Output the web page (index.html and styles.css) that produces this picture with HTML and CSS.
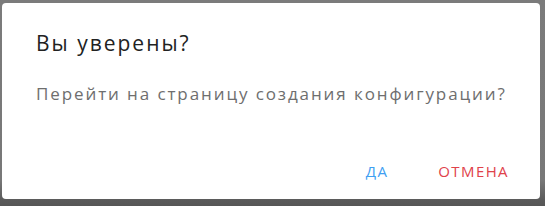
FILE: index.html
```html
<!DOCTYPE html>
<html lang="ru">
<head>
<meta charset="utf-8">
<link rel="stylesheet" href="styles.css">
</head>
<body>
<div class="backdrop">
  <div class="dialog">
    <h2 class="title">Вы уверены?</h2>
    <p class="content">Перейти на страницу создания конфигурации?</p>
    <div class="actions">
      <button class="btn btn-ok">ДА</button>
      <button class="btn btn-cancel">ОТМЕНА</button>
    </div>
  </div>
</div>
</body>
</html>
```
FILE: styles.css
```css
html, body {
  margin: 0;
  padding: 0;
  background: #7a7a7a;
  font-family: "Open Sans", "DejaVu Sans", sans-serif;
}
.backdrop {
  width: 545px;
  height: 206px;
  overflow: hidden;
  background: linear-gradient(#7b7b7b 0, #787878 180px, #5a5a5a 200px, #565656 206px);
}
.dialog {
  margin: 3px 0 0 2px;
  width: 538px;
  height: 196px;
  box-sizing: border-box;
  background: #fff;
  border-radius: 4px;
  display: flex;
  flex-direction: column;
  padding: 0 34px 0 34px;
}
.title {
  margin: 0;
  padding-top: 25px;
  font-size: 21px;
  font-weight: 400;
  line-height: 30px;
  color: #222;
  letter-spacing: 2px;
}
.content {
  margin: 0;
  padding-top: 24px;
  font-size: 17px;
  line-height: 24px;
  color: #6e6e6e;
  letter-spacing: 1.9px;
  white-space: nowrap;
}
.actions {
  margin-top: auto;
  padding-bottom: 18px;
  display: flex;
  justify-content: flex-end;
  gap: 50px;
  margin-right: -3px;
}
.btn {
  background: none;
  border: none;
  padding: 0;
  font-family: inherit;
  font-size: 15px;
  line-height: 20px;
  letter-spacing: 1.4px;
}
.btn-ok { color: #3f9ff2; }
.btn-cancel { color: #e0424a; }
```
